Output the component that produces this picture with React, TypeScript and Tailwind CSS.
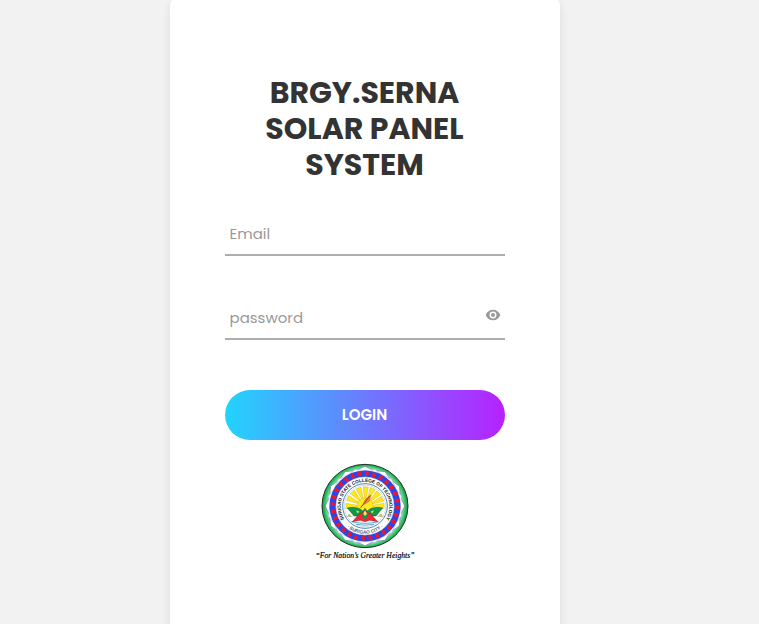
import { useState } from "react";

const CX = 165;
const CY = 153;

function polar(radius: number, degrees: number) {
  const a = (degrees * Math.PI) / 180;
  return `${(CX + radius * Math.cos(a)).toFixed(1)},${(CY + radius * Math.sin(a)).toFixed(1)}`;
}

function star(points: number, outer: number, inner: number, turn = 0) {
  return Array.from({ length: points * 2 }, (_, i) =>
    polar(i % 2 ? inner : outer, turn + (i * 180) / points),
  ).join(" ");
}

const rays = [180, 205, 228, 250, 272, 294, 316, 338, 360];

function Seal() {
  return (
    <svg viewBox="0 0 330 330" className="mx-auto mt-[15px] block size-[110px]" role="img" aria-label="Surigao State College of Technology seal">
      <defs>
        <path id="ring-top" d="M 107 198 A 73 73 0 1 1 223 198" />
        <path id="ring-bottom" d="M 101 206 A 83 83 0 0 0 229 206" />
        <radialGradient id="rim" gradientUnits="userSpaceOnUse" cx={CX} cy={CY} r="131">
          <stop offset="0.84" stopColor="#b4efc6" />
          <stop offset="0.91" stopColor="#3cc76c" />
          <stop offset="1" stopColor="#0c8c3e" />
        </radialGradient>
      </defs>
      <ellipse cx={CX} cy={CY} rx="129" ry="125" fill="url(#rim)" stroke="#1d3327" strokeWidth="3" />
      <polygon points={star(12, 119, 110)} fill="#fff" stroke="#7478a8" strokeWidth="2" />
      <polygon points={star(12, 106, 114)} fill="#eef4fb" stroke="#9aa4cc" strokeWidth="1.5" />
      <circle cx={CX} cy={CY} r="97" fill="none" stroke="#2448ef" strokeWidth="19" />
      <circle cx={CX} cy={CY} r="97" fill="none" stroke="#f01528" strokeWidth="13" pathLength="56" strokeDasharray="1 1" />
      <circle cx={CX} cy={CY} r="88" fill="#fff" stroke="#344ebd" strokeWidth="1.5" />
      <circle cx={CX} cy={CY} r="67" fill="#fff" stroke="#4d86b6" strokeWidth="3" />
      <circle cx={CX} cy={CY} r="62" fill="#fff" stroke="#b5d3e6" strokeWidth="2" />
      <g fill="#0b0c10" fontFamily="Liberation Sans, Arial, sans-serif" fontWeight="700" textAnchor="middle">
        <text fontSize="14">
          <textPath href="#ring-top" startOffset="50%">SURIGAO STATE COLLEGE OF TECHNOLOGY</textPath>
        </text>
        <text fontSize="14" fill="#48617c">
          <textPath href="#ring-bottom" startOffset="50%">· SURIGAO CITY ·</textPath>
        </text>
      </g>
      <g fill="#ffe81c" stroke="#c99b16" strokeWidth="1">
        {rays.map((angle) => (
          <polygon key={angle} points={`${polar(22, angle - 6)} ${polar(58, angle - 8)} ${polar(58, angle + 8)} ${polar(22, angle + 6)}`} />
        ))}
        <circle cx={CX} cy={CY} r="24" />
      </g>
      <path d="M106 164h118a60 60 0 0 1-118 0Z" fill="#fff" />
      <g strokeWidth="3">
        <path d="M110 184h18M202 184h18" stroke="#a9b7b8" />
        <path d="M124 200q41 10 82 0M138 208q27 5 54 0" fill="none" stroke="#61a9cb" />
      </g>
      <path d="M112 159c20-5 36 0 47 9l6-8 6 8c11-9 27-14 47-9l-20 24H132Z" fill="#109849" stroke="#075d32" strokeWidth="1.5" />
      <path d="m165 166-20 14-18 20 24-4 14 4 14-4 24 4-18-20Z" fill="#ef2636" stroke="#9b1d26" strokeWidth="1.5" />
      <path d="m155 182 10-16 10 16-10 12Z" fill="#109849" />
      <path d="m160 176 5-10 6 10-6 7ZM138 166l10 4-5 5Zm54 0-10 4 5 5Z" fill="#ffe45a" />
      <path d="M160 150c2-14 9-22 23-30l-5 19Z" fill="#e7902b" stroke="#965324" strokeWidth="1" />
      <path d="m152 158 28-36" stroke="#a74022" strokeWidth="3" />
      <g fill="#e4ba35">
        <circle cx="118" cy="181" r="4" />
        <circle cx="212" cy="181" r="4" />
      </g>
      <text x="165" y="308" textAnchor="middle" fontFamily="Liberation Serif, serif" fontStyle="italic" fontSize="23" fill="#000" stroke="#000" strokeWidth="0.5">
        “For Nation’s Greater Heights”
      </text>
    </svg>
  );
}

const field =
  "block h-[45px] w-full border-b-2 border-[#adadad] bg-transparent px-[5px] pt-px text-[15px] text-[#555] outline-none placeholder:text-[#999]";

export default function App() {
  const [visible, setVisible] = useState(false);

  return (
    <main className="flex h-screen min-h-[624px] justify-center overflow-hidden bg-[#f2f2f2] pr-[30px] font-['Poppins','Inter',sans-serif]">
      <section className="-mt-1 -mb-4 w-full max-w-[390px] rounded-[10px] bg-white px-[55px] pt-[79px] shadow-[0_5px_10px_rgba(0,0,0,0.1)]">
        <form onSubmit={(event) => event.preventDefault()}>
          <h1 className="px-5 text-center text-[30px] leading-9 font-bold text-[#333]">BRGY.SERNA SOLAR PANEL SYSTEM</h1>
          <div className="mt-7">
            <input className={field} type="email" aria-label="Email" placeholder="Email" />
          </div>
          <div className="relative mt-[39px]">
            <input className={field} type={visible ? "text" : "password"} aria-label="Password" placeholder="password" />
            <button
              type="button"
              aria-label="Show password"
              onClick={() => setVisible(!visible)}
              className="absolute top-3 right-1 flex size-4 items-center justify-center text-[#999]"
            >
              <svg viewBox="0 0 24 18" className="h-3 w-4" aria-hidden="true">
                <path fill="currentColor" fillRule="evenodd" d="M12 1C7 1 3 4 1 9c2 5 6 8 11 8s9-3 11-8c-2-5-6-8-11-8Zm0 13.2A5.2 5.2 0 1 1 12 3.800a5.200 5.200 0 0 1 0 10.400Zm0-2.200a3 3 0 1 0 0-6 3 3 0 0 0 0 6Z" />
              </svg>
            </button>
          </div>
          <button
            type="submit"
            className="mt-[50px] block h-[50px] w-full rounded-full bg-linear-to-r/srgb from-[#21d4fd] to-[#b721ff] text-[15px] font-semibold text-white"
          >
            LOGIN
          </button>
        </form>
        <Seal />
      </section>
    </main>
  );
}
